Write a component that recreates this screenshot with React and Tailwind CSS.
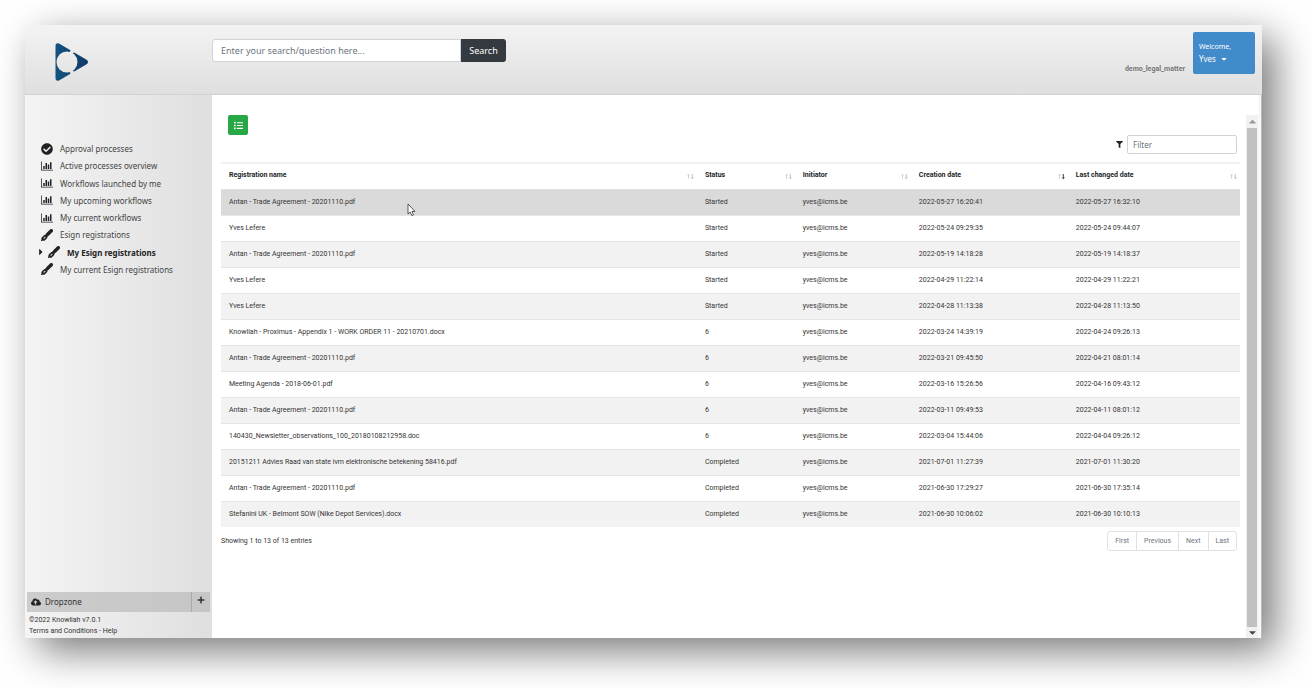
import React from "react";
import { useState } from "react";
import {
  FaCheckCircle,
  FaCaretRight,
  FaCaretDown,
  FaCaretUp,
  FaCloudUploadAlt,
  FaPlus,
  FaList,
  FaFilter,
} from "react-icons/fa";

function ChartIcon({ className }) {
  return (
    <svg viewBox="0 0 2048 1792" fill="currentColor" className={className} aria-hidden="true">
      <path d="M640 896v512h-256v-512h256zm384-512v1024h-256v-1024h256zm1024 1152v128h-2048v-1536h128v1408h1920zm-640-896v768h-256v-768h256zm384-384v1152h-256v-1152h256z" />
    </svg>
  );
}

function BrushIcon({ className }) {
  return (
    <svg viewBox="0 0 12 12" fill="none" stroke="currentColor" strokeLinecap="round" className={className} aria-hidden="true">
      <path d="M10.300 1.700L7 5" strokeWidth="3.400" />
      <path d="M6.500 5.500L5 7" strokeWidth="2.800" />
      <path d="M4.300 8L2.600 9.600" strokeWidth="4.200" />
      <path d="M0.800 11.200L2 10.400" strokeWidth="1.600" />
      <path d="M3.900 8.300L3 9.200" stroke="#d8d8d8" strokeWidth="1.200" />
    </svg>
  );
}

const menu = [
  { label: "Approval processes", icon: FaCheckCircle },
  { label: "Active processes overview", icon: ChartIcon },
  { label: "Workflows launched by me", icon: ChartIcon },
  { label: "My upcoming workflows", icon: ChartIcon },
  { label: "My current workflows", icon: ChartIcon },
  { label: "Esign registrations", icon: BrushIcon },
  { label: "My Esign registrations", icon: BrushIcon, active: true },
  { label: "My current Esign registrations", icon: BrushIcon },
];

const columns = [
  { label: "Registration name", width: "w-[46.7%]" },
  { label: "Status", width: "w-[9.6%]" },
  { label: "Initiator", width: "w-[11.4%]" },
  { label: "Creation date", width: "w-[15.4%]", sorted: true },
  { label: "Last changed date", width: "w-[16.9%]" },
];

const registrations = [
  ["Antan - Trade Agreement - 20201110.pdf", "Started", "2022-05-27 16:20:41", "2022-05-27 16:32:10"],
  ["Yves Lefere", "Started", "2022-05-24 09:29:35", "2022-05-24 09:44:07"],
  ["Antan - Trade Agreement - 20201110.pdf", "Started", "2022-05-19 14:18:28", "2022-05-19 14:18:37"],
  ["Yves Lefere", "Started", "2022-04-29 11:22:14", "2022-04-29 11:22:21"],
  ["Yves Lefere", "Started", "2022-04-28 11:13:38", "2022-04-28 11:13:50"],
  ["Knowliah - Proximus - Appendix 1 - WORK ORDER 11 - 20210701.docx", "6", "2022-03-24 14:39:19", "2022-04-24 09:26:13"],
  ["Antan - Trade Agreement - 20201110.pdf", "6", "2022-03-21 09:45:50", "2022-04-21 08:01:14"],
  ["Meeting Agenda - 2018-06-01.pdf", "6", "2022-03-16 15:26:56", "2022-04-16 09:43:12"],
  ["Antan - Trade Agreement - 20201110.pdf", "6", "2022-03-11 09:49:53", "2022-04-11 08:01:12"],
  ["140430_Newsletter_observations_100_20180108212958.doc", "6", "2022-03-04 15:44:06", "2022-04-04 09:26:12"],
  ["20151211 Advies Raad van state ivm elektronische betekening 58416.pdf", "Completed", "2021-07-01 11:27:39", "2021-07-01 11:30:20"],
  ["Antan - Trade Agreement - 20201110.pdf", "Completed", "2021-06-30 17:29:27", "2021-06-30 17:35:14"],
  ["Stefanini UK - Belmont SOW (Nike Depot Services).docx", "Completed", "2021-06-30 10:06:02", "2021-06-30 10:10:13"],
];

function Logo() {
  return (
    <svg viewBox="0 0 34 38" className="w-[34px] h-[38px]" role="img" aria-label="Knowliah">
      <defs>
        <linearGradient id="logoFill" x1="0" y1="0" x2="1" y2="0">
          <stop offset="0" stopColor="#14527f" />
          <stop offset="1" stopColor="#0f3a68" />
        </linearGradient>
        <mask id="logoMask">
          <rect width="34" height="38" fill="#fff" />
          <circle cx="12" cy="19" r="10.5" fill="#000" />
          <path d="M11 19L16 6L20 8Z" fill="#000" />
          <path d="M11 19L16 32L20 30Z" fill="#000" />
        </mask>
      </defs>
      <path
        d="M0.500 3Q0.500 -0.500 4 0.500L32 17Q34 19 32 21L4 37.500Q0.500 38.500 0.500 35Z"
        fill="url(#logoFill)"
        mask="url(#logoMask)"
      />
    </svg>
  );
}

function Header() {
  return (
    <header className="flex items-start h-[70px] pr-[7px] border-b border-[#d2d2d2] bg-linear-to-b from-[#f3f3f3] to-[#dfdfdf]">
      <a href="#home" className="w-[187px] shrink-0 pt-[18px] pl-[30px]">
        <Logo />
      </a>
      <form className="flex pt-3.5" onSubmit={(e) => e.preventDefault()}>
        <input
          type="text"
          aria-label="Search"
          placeholder="Enter your search/question here..."
          className="w-[249px] h-[23px] px-2 text-[9px] bg-white border border-[#ced4da] rounded-l-[3px] placeholder:text-[#6c757d]"
        />
        <button type="submit" className="h-[23px] w-[45px] text-[9px] text-white bg-[#343a40] rounded-r-[3px]">
          Search
        </button>
      </form>
      <div className="flex items-end ml-auto pt-[7px] gap-2">
        <span className="font-[Roboto] font-bold text-[7px] leading-[9px] text-[#777]">demo_legal_matter</span>
        <button
          type="button"
          className="w-[62px] h-[42px] px-1.5 text-left text-[7px] leading-3 text-white bg-[#428bca] rounded-[2px]"
        >
          Welcome,
          <span className="flex items-center gap-1 text-[8px]">
            Yves <FaCaretDown />
          </span>
        </button>
      </div>
    </header>
  );
}

function Sidebar() {
  return (
    <aside className="flex flex-col w-[187px] shrink-0 px-0.5 pb-px text-[#333] bg-linear-to-r from-[#f4f4f4] to-[#dfdfdf]">
      <nav className="flex flex-col justify-between h-[138px] mt-[45px] pl-3.5 text-[8px] leading-[17px]">
        {menu.map(({ label, icon: Icon, active }) => (
          <a
            key={label}
            href="#menu"
            className={
              active
                ? "flex items-center h-[17px] -ml-0.5 font-bold text-[#222]"
                : "flex items-center h-[17px] text-[#444]"
            }
          >
            {active && <FaCaretRight className="w-1 mr-[5px] text-[10px] text-[#222]" />}
            <Icon className="w-3 h-3 mr-[7px] text-[#222]" />
            {label}
          </a>
        ))}
      </nav>
      <div className="flex items-stretch h-5 mt-auto bg-[#bbb]/70">
        <div className="flex items-center flex-1 gap-1 pl-1 text-[8px]">
          <FaCloudUploadAlt className="w-2.5 h-2.5 text-[#222]" />
          Dropzone
        </div>
        <button
          type="button"
          aria-label="Add to dropzone"
          className="flex justify-center w-[19px] pt-1 border-l border-[#aaa]"
        >
          <FaPlus className="w-2 h-2" />
        </button>
      </div>
      <footer className="pt-[3px] pl-0.5 font-[Roboto] text-[7px] leading-[11px]">
        <p>©2022 Knowliah v7.0.1</p>
        <a href="#terms">Terms and Conditions</a> - <a href="#help">Help</a>
      </footer>
    </aside>
  );
}

function SortArrows({ sorted }) {
  return (
    <svg viewBox="0 0 7 7" className="w-[7px] h-[7px] mt-[3px]" fill="none" aria-hidden="true">
      <path d="M1.500 6V1.500M0.500 2.500L1.500 1.200L2.500 2.500" stroke="#ccc" strokeWidth="0.8" />
      <path
        d="M5.300 1V5.500M4.200 4.500L5.300 5.800L6.400 4.500"
        stroke={sorted ? "#222" : "#bbb"}
        strokeWidth="0.9"
      />
    </svg>
  );
}

function RegistrationsTable({ rows }) {
  const [hovered, setHovered] = useState(0);

  return (
    <table className="w-full table-fixed text-left font-[Roboto] text-[7px] leading-[10px] text-[#333]">
      <thead>
        <tr className="h-[26px] border-t-2 border-b border-t-[#f0f0f0] border-b-[#dee2e6]">
          {columns.map((col) => (
            <th key={col.label} className={`${col.width} px-2 pb-0.5 font-bold text-[#212529]`}>
              <div className="flex justify-between -mr-[5px]">
                {col.label}
                <SortArrows sorted={col.sorted} />
              </div>
            </th>
          ))}
        </tr>
      </thead>
      <tbody>
        {rows.map(([name, status, created, changed], i) => (
          <tr
            key={created}
            onMouseEnter={() => setHovered(i)}
            className={`h-[26px] border-b border-[#e4e6e8] last:border-b-0 ${
              i === hovered ? "bg-[#dadada]" : "odd:bg-[#f2f2f2]"
            }`}
          >
            <td className="px-2">{name}</td>
            <td className="px-2">{status}</td>
            <td className="px-2">yves@icms.be</td>
            <td className="px-2">{created}</td>
            <td className="px-2">{changed}</td>
          </tr>
        ))}
      </tbody>
    </table>
  );
}

function ScrollBar() {
  return (
    <div className="flex flex-col w-3 mt-5 shrink-0 bg-[#f1f1f1]" aria-hidden="true">
      <div className="flex items-center justify-center h-[13px] text-[11px] text-[#999]">
        <FaCaretUp />
      </div>
      <div className="flex-1 mx-px bg-[#c1c1c1]"></div>
      <div className="flex items-center justify-center h-[11px] text-[11px] text-[#444]">
        <FaCaretDown />
      </div>
    </div>
  );
}

function App() {
  const [filter, setFilter] = useState("");

  const rows = registrations.filter((row) =>
    row.join(" ").toLowerCase().includes(filter.toLowerCase())
  );

  return (
    <div className="flex min-h-screen pt-[25px] pl-[25px] pr-[50px] pb-[50px] bg-white font-['Noto_Sans',sans-serif]">
      <div className="flex flex-col flex-1 bg-white shadow-[13px_13px_38px_0px_rgba(0,0,0,0.53)]">
        <Header />
        <div className="flex flex-1">
          <Sidebar />
          <main className="relative flex-1 pt-5 pl-[9px] pr-1.5">
            <button
              type="button"
              aria-label="List view"
              className="flex items-center justify-center w-5 h-5 ml-[7px] text-white bg-[#28a745] rounded-[2px]"
            >
              <FaList className="w-[9px] h-[9px]" />
            </button>
            <div className="flex items-center justify-end gap-1 mb-2 pr-[3px]">
              <label htmlFor="filter">
                <FaFilter className="w-[7px] h-[7px] text-[#212529]" aria-label="Filter" />
              </label>
              <input
                id="filter"
                type="text"
                placeholder="Filter"
                value={filter}
                onChange={(e) => setFilter(e.target.value)}
                className="w-[110px] h-[19px] px-[5px] text-[8px] border border-[#ced4da] rounded-[2px] placeholder:text-[#6c757d]"
              />
            </div>
            <RegistrationsTable rows={rows} />
            <div className="flex items-start justify-between pt-1 pr-[3px] font-[Roboto] text-[7px]">
              <p className="leading-5 text-[#333]">
                Showing 1 to {rows.length} of {registrations.length} entries
              </p>
              <div className="flex border border-[#dee2e6] rounded-[3px] divide-x divide-[#dee2e6] leading-[18px] text-[#6c757d]">
                <button type="button" className="px-[7px]">First</button>
                <button type="button" className="px-[7px]">Previous</button>
                <button type="button" className="px-[7px]">Next</button>
                <button type="button" className="px-[7px]">Last</button>
              </div>
            </div>
            <svg
              viewBox="0 0 9 14"
              className="absolute top-[108px] left-[195px] w-[9px] h-[14px]"
              aria-hidden="true"
            >
              <path
                d="M1 1V11L3.200 9L4.800 12.600L6.500 11.800L5 8.400H8Z"
                fill="#fff"
                stroke="#333"
                strokeWidth="0.8"
              />
            </svg>
          </main>
          <ScrollBar />
          <div className="w-1 border-r border-[#bbb] bg-[#f8f8f8]"></div>
        </div>
      </div>
    </div>
  );
}

export default App;
